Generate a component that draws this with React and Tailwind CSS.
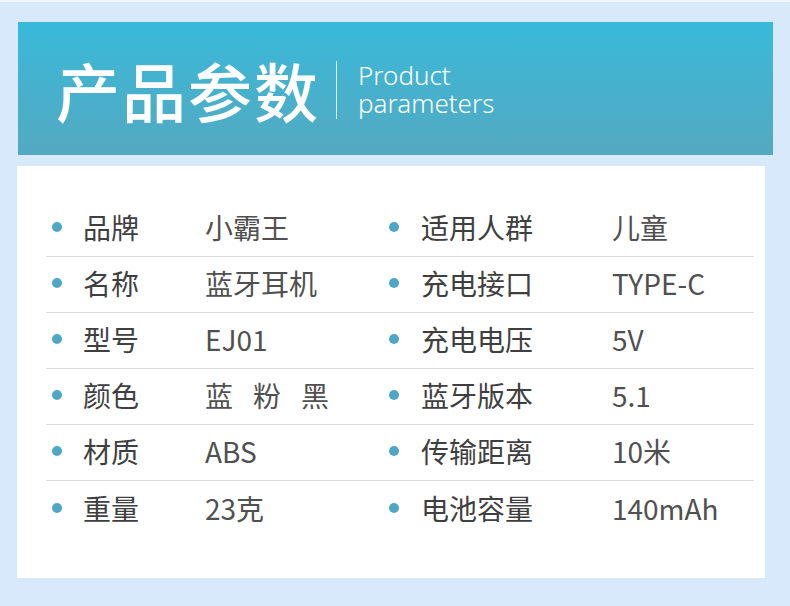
const rows = [
  ["品牌", "小霸王", "适用人群", "儿童"],
  ["名称", "蓝牙耳机", "充电接口", "TYPE-C"],
  ["型号", "EJ01", "充电电压", "5V"],
  ["颜色", null, "蓝牙版本", "5.1"],
  ["材质", "ABS", "传输距离", "10米"],
  ["重量", "23克", "电池容量", "140mAh"],
];

function Dot() {
  return <span className="w-[10px] h-[10px] rounded-full bg-[#4ea8c3] shrink-0" />;
}

function Colors() {
  return (
    <span className="flex gap-[20px]">
      <span>蓝</span>
      <span>粉</span>
      <span>黑</span>
    </span>
  );
}

export default function App() {
  return (
    <div
      className="w-[790px] h-[606px] bg-[#d8e9fc] border-t-2 border-[#edf5fe] pt-[20px] overflow-hidden"
      style={{ fontFamily: '"Noto Sans CJK SC", "Noto Sans", sans-serif' }}
    >
      <div className="ml-[18px] w-[755px] h-[133px] bg-gradient-to-b from-[#37b9da] to-[#52a9c0] flex items-center pl-[38px]">
        <h1 className="text-[64px] leading-none font-medium text-white tracking-[2px]">产品参数</h1>
        <div className="w-px h-[58px] bg-white/80 ml-[16px] mt-[2px]" />
        <div
          className="ml-[21px] text-white text-[26px] leading-[28px] font-light"
          style={{ fontFamily: '"Noto Sans", sans-serif' }}
        >
          <div>Product</div>
          <div>parameters</div>
        </div>
      </div>

      <div className="mt-[11px] ml-[17px] w-[748px] h-[412px] bg-white pt-[35px]">
        <div className="ml-[29px] w-[708px]">
          {rows.map((r, i) => (
            <div
              key={i}
              className={`flex h-[56px] pb-[3px] items-center text-[28px] ${
                i < rows.length - 1 ? "border-b border-[#dcdcdc]" : ""
              }`}
            >
              <div className="w-[337px] flex items-center pl-[6px]">
                <Dot />
                <span className="ml-[21px] w-[122px] text-[#3f3f3f]">{r[0]}</span>
                <span className="text-[#505050]">{r[1] ?? <Colors />}</span>
              </div>
              <div className="flex items-center pl-[6px]">
                <Dot />
                <span className="ml-[22px] w-[191px] text-[#3f3f3f]">{r[2]}</span>
                <span className="text-[#505050]">{r[3]}</span>
              </div>
            </div>
          ))}
        </div>
      </div>
    </div>
  );
}
